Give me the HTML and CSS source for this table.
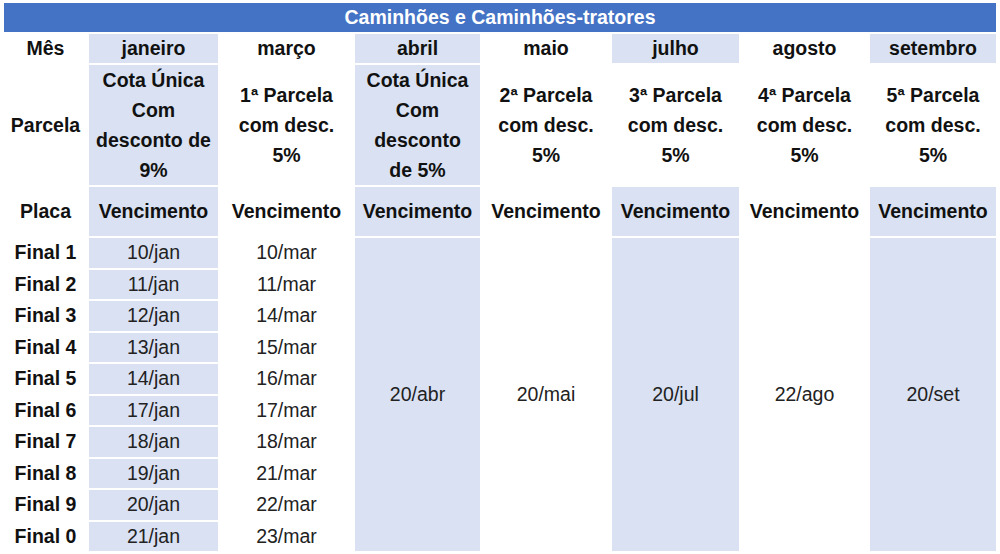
FILE: index.html
```html
<!DOCTYPE html>
<html lang="pt-BR">
<head>
<meta charset="utf-8">
<title>Caminhões e Caminhões-tratores</title>
<link rel="stylesheet" href="styles.css">
</head>
<body>
<table class="ipva">
  <colgroup>
    <col class="c-label">
    <col class="c-jan">
    <col class="c-mar">
    <col class="c-abr">
    <col class="c-mai">
    <col class="c-jul">
    <col class="c-ago">
    <col class="c-set">
  </colgroup>
  <thead>
    <tr class="r-title"><th colspan="8" class="title">Caminhões e Caminhões-tratores</th></tr>
    <tr class="r-mes">
      <th>Mês</th>
      <th class="sh">janeiro</th>
      <th>março</th>
      <th class="sh">abril</th>
      <th>maio</th>
      <th class="sh">julho</th>
      <th>agosto</th>
      <th class="sh">setembro</th>
    </tr>
    <tr class="r-parc">
      <th>Parcela</th>
      <th class="sh">Cota Única<br>Com<br>desconto de<br>9%</th>
      <th>1ª Parcela<br>com desc.<br>5%</th>
      <th class="sh">Cota Única<br>Com<br>desconto<br>de 5%</th>
      <th>2ª Parcela<br>com desc.<br>5%</th>
      <th>3ª Parcela<br>com desc.<br>5%</th>
      <th>4ª Parcela<br>com desc.<br>5%</th>
      <th>5ª Parcela<br>com desc.<br>5%</th>
    </tr>
    <tr class="r-venc">
      <th>Placa</th>
      <th class="sh">Vencimento</th>
      <th>Vencimento</th>
      <th class="sh">Vencimento</th>
      <th>Vencimento</th>
      <th class="sh">Vencimento</th>
      <th>Vencimento</th>
      <th class="sh">Vencimento</th>
    </tr>
  </thead>
  <tbody>
    <tr>
      <th>Final 1</th><td class="sh">10/jan</td><td>10/mar</td>
      <td class="sh" rowspan="10">20/abr</td>
      <td rowspan="10">20/mai</td>
      <td class="sh" rowspan="10">20/jul</td>
      <td rowspan="10">22/ago</td>
      <td class="sh" rowspan="10">20/set</td>
    </tr>
    <tr><th>Final 2</th><td class="sh">11/jan</td><td>11/mar</td></tr>
    <tr><th>Final 3</th><td class="sh">12/jan</td><td>14/mar</td></tr>
    <tr><th>Final 4</th><td class="sh">13/jan</td><td>15/mar</td></tr>
    <tr><th>Final 5</th><td class="sh">14/jan</td><td>16/mar</td></tr>
    <tr><th>Final 6</th><td class="sh">17/jan</td><td>17/mar</td></tr>
    <tr><th>Final 7</th><td class="sh">18/jan</td><td>18/mar</td></tr>
    <tr><th>Final 8</th><td class="sh">19/jan</td><td>21/mar</td></tr>
    <tr><th>Final 9</th><td class="sh">20/jan</td><td>22/mar</td></tr>
    <tr><th>Final 0</th><td class="sh">21/jan</td><td>23/mar</td></tr>
  </tbody>
</table>
</body>
</html>
```
FILE: styles.css
```css
html, body {
  margin: 0;
  padding: 0;
  background: #ffffff;
}

body {
  font-family: "Liberation Sans", Arial, sans-serif;
  font-size: 19.5px;
  color: #1a1a1a;
}

.ipva {
  margin: 2px 0 0 3px;
  width: 994px;
  table-layout: fixed;
  border-collapse: separate;
  border-spacing: 0;
}

.c-label { width: 85px; }
.c-jan { width: 131px; }
.c-mar { width: 135px; }
.c-abr { width: 127px; }
.c-mai { width: 130px; }
.c-jul { width: 129px; }
.c-ago { width: 129px; }
.c-set { width: 128px; }

.ipva th,
.ipva td {
  border: 1px solid #ffffff;
  padding: 0;
  text-align: center;
  vertical-align: middle;
  white-space: nowrap;
}

.ipva th {
  font-weight: bold;
  color: #111111;
}

.ipva td {
  font-weight: normal;
  color: #222222;
}

.ipva .sh {
  background: #d9e1f2;
}

.ipva .title {
  background: #4472c4;
  color: #ffffff;
  height: 29px;
  line-height: 29px;
}

.r-mes th {
  height: 29px;
  line-height: 29px;
}

.r-parc th {
  height: 119px;
  line-height: 30px;
}

.r-venc th {
  height: 49px;
}

.ipva tbody th,
.ipva tbody td {
  height: 29.5px;
  line-height: 29px;
}
```
